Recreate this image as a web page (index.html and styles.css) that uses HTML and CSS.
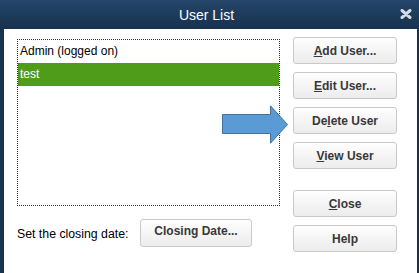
FILE: index.html
```html
<!DOCTYPE html>
<html lang="en">
  <head>
    <meta charset="UTF-8" />
    <title>User List</title>
    <link rel="stylesheet" href="styles.css">
  </head>
  <body>
    <div class="dialog">
      <!-- title bar -->
      <div class="titlebar">
        <span class="title">User List</span>
        <svg class="close-x" width="12" height="10" viewBox="0 0 12 10">
          <path d="M2 1.5 L10 8.5 M10 1.5 L2 8.5" stroke="#d6dce3" stroke-width="3" stroke-linecap="round" />
        </svg>
      </div>
      <!-- body -->
      <div class="content">
        <div class="left-col">
          <div class="user-list">
            <div class="user-row">Admin (logged on)</div>
            <div class="user-row is-selected">test</div>
          </div>
          <div class="closing-row">
            <span class="closing-label">Set the closing date:</span>
            <button class="btn closing-btn">Closing Date...</button>
          </div>
        </div>
        <div class="right-col">
          <button class="btn"><u>A</u>dd User...</button>
          <button class="btn"><u>E</u>dit User...</button>
          <button class="btn">De<u>l</u>ete User</button>
          <button class="btn"><u>V</u>iew User</button>
          <button class="btn btn-close"><u>C</u>lose</button>
          <button class="btn">Help</button>
        </div>
      </div>
      <svg class="arrow" width="67" height="40" viewBox="0 0 67 40">
        <polygon points="0.5,9.5 48.5,9.5 48.5,0.8 65.5,19.5 48.5,38.2 48.5,28.5 0.5,28.5" fill="#5b9bd5" stroke="#41719c" stroke-width="1" />
      </svg>
    </div>
  </body>
</html>
```

FILE: styles.css
```css
body {
  margin: 0;
  background: white;
  font-family: "Liberation Sans", Arial, sans-serif;
}
.dialog {
  position: relative;
  box-sizing: border-box;
  width: 419px;
  height: 273px;
  border-left: 4px solid #19334f;
  border-right: 2px solid #19334f;
  background: white;
}
.titlebar {
  position: relative;
  height: 29px;
  margin-left: -4px;
  margin-right: -2px;
  background: linear-gradient(#24466a, #17314e);
  display: flex;
  align-items: center;
  justify-content: center;
}
.title {
  color: white;
  font-size: 14px;
  margin-left: -6px;
}
.close-x {
  position: absolute;
  right: 7px;
  top: 9px;
}
.content {
  display: flex;
  padding: 8px 0 0 13px;
}
.left-col {
  margin-top: 2px;
  width: 263px;
}
.user-list {
  box-sizing: border-box;
  height: 167px;
  border: 1px dotted #333;
  font-size: 12px;
}
.user-row {
  height: 23px;
  line-height: 23px;
  padding-left: 2px;
  color: black;
}
.is-selected {
  background-color: #4f9c1b;
  color: white;
}
.closing-row {
  display: flex;
  align-items: center;
  margin-top: 13px;
}
.closing-label {
  font-size: 12.3px;
  color: black;
  width: 123px;
  padding-top: 2px;
}
.btn {
  box-sizing: border-box;
  height: 27px;
  padding: 0;
  border: 1px solid #c9c9c9;
  border-radius: 3px;
  background: linear-gradient(#fefefe, #ececec);
  font-family: "Liberation Sans", Arial, sans-serif;
  font-size: 12px;
  font-weight: bold;
  color: #383838;
}
.closing-btn {
  width: 112px;
  height: 28px;
  padding-bottom: 4px;
}
.right-col {
  display: flex;
  flex-direction: column;
  gap: 8px;
  width: 104px;
  margin-left: 13px;
}
.btn-close {
  margin-top: 13px;
}
.arrow {
  position: absolute;
  left: 218px;
  top: 105px;
}
```
